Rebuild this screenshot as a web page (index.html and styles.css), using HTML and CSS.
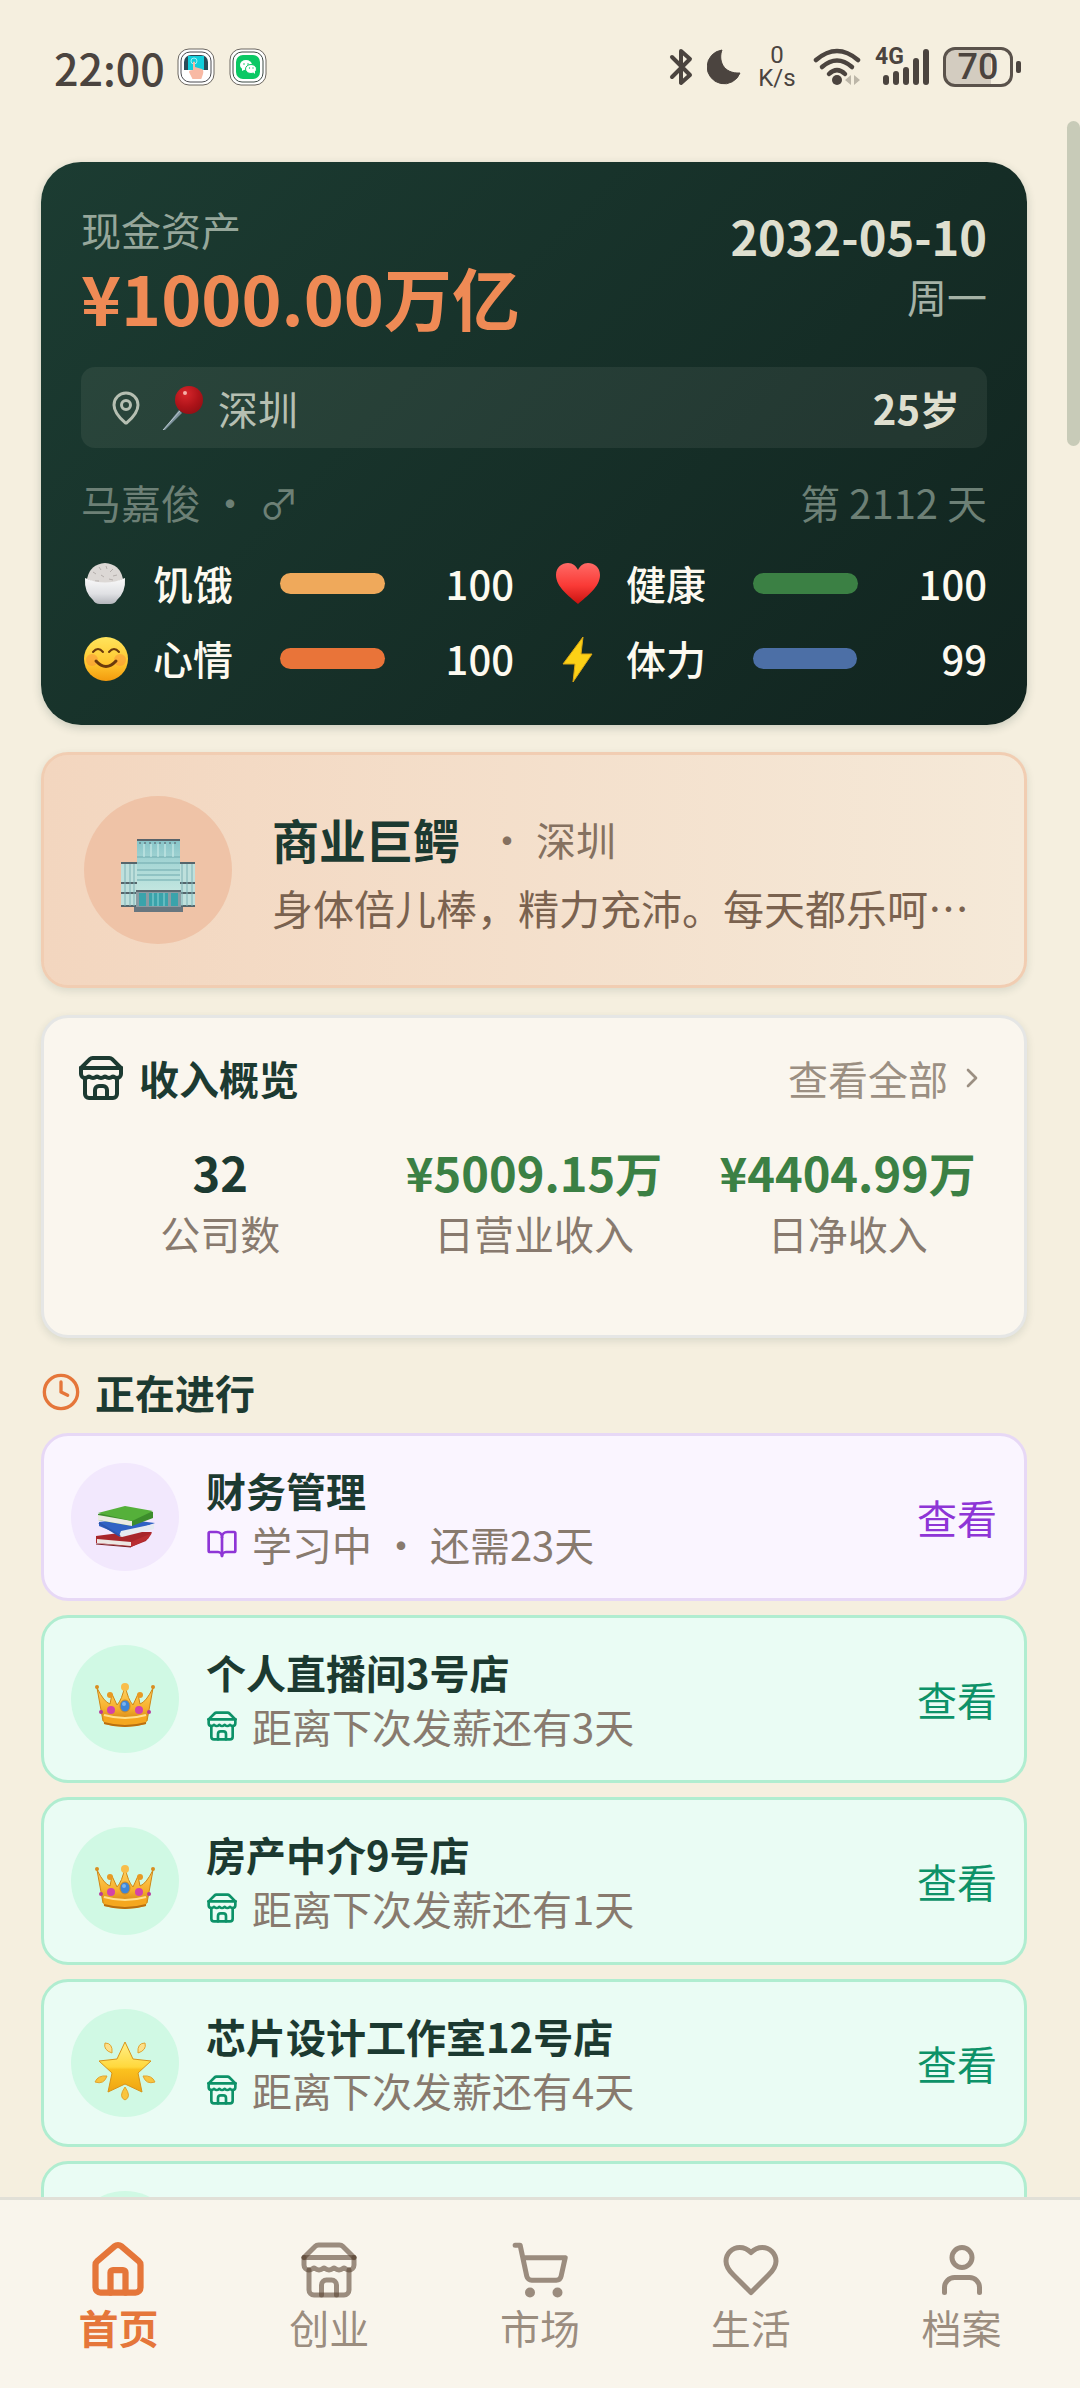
FILE: index.html
```html
<!DOCTYPE html>
<html lang="zh-CN">
<head>
<meta charset="utf-8">
<meta name="viewport" content="width=device-width, initial-scale=1">
<title>首页</title>
<link rel="stylesheet" href="styles.css">
</head>
<body>
<svg class="defs" width="0" height="0" aria-hidden="true">
  <defs>
    <radialGradient id="g-ball" cx=".38" cy=".28" r=".8"><stop offset="0" stop-color="#d8262b"/><stop offset=".6" stop-color="#ae1319"/><stop offset="1" stop-color="#8f0f14"/></radialGradient>
    <linearGradient id="g-face" x1="0" y1="0" x2="0" y2="1"><stop offset="0" stop-color="#ffe45c"/><stop offset=".6" stop-color="#ffc62e"/><stop offset="1" stop-color="#f39a0d"/></linearGradient>
    <linearGradient id="g-heart" x1="0" y1="0" x2="0" y2="1"><stop offset="0" stop-color="#ff6a66"/><stop offset=".55" stop-color="#fa3a36"/><stop offset="1" stop-color="#c9120f"/></linearGradient>
    <linearGradient id="g-bowl" x1="0" y1="0" x2="0" y2="1"><stop offset="0" stop-color="#fafafa"/><stop offset=".6" stop-color="#e0e1e4"/><stop offset="1" stop-color="#b4b6bc"/></linearGradient>
    <linearGradient id="g-gold" x1="0" y1="0" x2="0" y2="1"><stop offset="0" stop-color="#ffd466"/><stop offset=".6" stop-color="#f7b02c"/><stop offset="1" stop-color="#c97a10"/></linearGradient>
    <linearGradient id="g-star" x1="0" y1="0" x2="0" y2="1"><stop offset="0" stop-color="#fff08a"/><stop offset=".5" stop-color="#ffd83c"/><stop offset=".55" stop-color="#fbc21f"/><stop offset="1" stop-color="#efa313"/></linearGradient>
    <linearGradient id="g-glass" x1="0" y1="0" x2="0" y2="1"><stop offset="0" stop-color="#86c4c8"/><stop offset=".5" stop-color="#a9d8d6"/><stop offset="1" stop-color="#c3e6e0"/></linearGradient>

    <symbol id="store" viewBox="0 0 24 24">
      <path d="m2 7 4.410-4.410A2 2 0 0 1 7.830 2h8.340a2 2 0 0 1 1.420.590L22 7"/>
      <path d="M4 12v8a2 2 0 0 0 2 2h12a2 2 0 0 0 2-2v-8"/>
      <path d="M15 22v-4a2 2 0 0 0-2-2h-2a2 2 0 0 0-2 2v4"/>
      <path d="M2 7h20"/>
      <path d="M22 7v3a2 2 0 0 1-2 2a2.700 2.700 0 0 1-1.590-.630.700.700 0 0 0-.820 0A2.700 2.700 0 0 1 16 12a2.700 2.700 0 0 1-1.590-.630.700.700 0 0 0-.820 0A2.700 2.700 0 0 1 12 12a2.700 2.700 0 0 1-1.590-.630.700.700 0 0 0-.820 0A2.700 2.700 0 0 1 8 12a2.700 2.700 0 0 1-1.590-.630.700.700 0 0 0-.820 0A2.700 2.700 0 0 1 4 12a2 2 0 0 1-2-2V7"/>
    </symbol>

    <symbol id="crown" viewBox="0 0 60 60">
      <path d="M8 46 L2 13 Q9 27 15 29 L17 19 L22 30 Q27 25 30 10 Q33 25 38 30 L43 19 L45 29 Q51 27 58 13 L52 46 Q30 52 8 46Z" fill="url(#g-gold)" stroke="#cf8717" stroke-width="1"/>
      <path d="M8 40 Q30 46 52 40 L51 49 Q30 55 9 49Z" fill="#f5a71f"/>
      <path d="M9 47 Q30 53 51 47 L51 49 Q30 55 9 49Z" fill="#b96f10"/>
      <path d="M9 40 Q30 46 51 40" fill="none" stroke="#ffe08a" stroke-width="2"/>
      <circle cx="30" cy="12" r="4" fill="#f8be4a"/><circle cx="15" cy="20" r="3" fill="#e79a24"/><circle cx="45" cy="20" r="3" fill="#e79a24"/>
      <circle cx="2" cy="12" r="2" fill="#d98e20"/><circle cx="58" cy="12" r="2" fill="#d98e20"/>
      <ellipse cx="30" cy="31" rx="5" ry="6" fill="#3f86d8" stroke="#d08a20" stroke-width="1"/><ellipse cx="29" cy="29" rx="2" ry="2" fill="#7db4ee"/>
      <circle cx="16" cy="35" r="4" fill="#d443a8"/><circle cx="44" cy="35" r="4" fill="#d443a8"/><circle cx="6" cy="37" r="2" fill="#b83a9a"/><circle cx="54" cy="37" r="2" fill="#b83a9a"/>
    </symbol>
  </defs>
</svg>

<div class="app">
  <header class="status">
    <div class="status-side">
      <span class="clock">22:00</span>
      <svg class="app-icon" viewBox="0 0 38 38"><rect x="1" y="1" width="36" height="36" rx="11" fill="#fff" stroke="#6b6660" stroke-width="1"/><rect x="4" y="4" width="30" height="30" rx="9" fill="#fff" stroke="#4b4b50" stroke-width="1"/><clipPath id="c1"><rect x="7" y="7" width="24" height="24" rx="7"/></clipPath><g clip-path="url(#c1)"><rect x="7" y="7" width="24" height="24" fill="#fff"/><rect x="7" y="7" width="24" height="15" fill="#2b4c58"/><rect x="11" y="8" width="16" height="14" fill="#12cfdc"/><circle cx="17" cy="13" r="3" fill="none" stroke="#a5f1f5"/><path d="M16 14q1-1 2 0v5l7 2q2 1 1 5l-2 6h-8l-4-8q0-2 4-2z" fill="#f8b9a4"/></g></svg>
      <svg class="app-icon" viewBox="0 0 38 38"><rect x="1" y="1" width="36" height="36" rx="11" fill="#fff" stroke="#6b6660" stroke-width="1"/><rect x="4" y="4" width="30" height="30" rx="9" fill="#fff" stroke="#3d4a44" stroke-width="1"/><rect x="7" y="7" width="24" height="24" rx="7" fill="#0ac864"/><ellipse cx="17" cy="17" rx="6" ry="5" fill="#fff"/><path d="M13 20v3l4-2z" fill="#fff"/><ellipse cx="22" cy="21" rx="5.500" ry="4.500" fill="#fff" stroke="#0ac864" stroke-width="1"/><path d="M24 24l2 2v-3z" fill="#fff"/><circle cx="15" cy="16" r=".8" fill="#0ac864"/><circle cx="19" cy="16" r=".8" fill="#0ac864"/><circle cx="20.500" cy="20" r=".7" fill="#0ac864"/><circle cx="24" cy="20" r=".7" fill="#0ac864"/></svg>
    </div>
    <div class="status-side status-right">
      <svg class="bt" viewBox="0 0 24 38"><path d="M3 9 L21 27 L12 35 V3 L21 11 L3 29" fill="none" stroke="#4b443f" stroke-width="4" stroke-linecap="round" stroke-linejoin="round"/></svg>
      <svg class="moon" viewBox="0 0 34 38"><path d="M15 2 C11 12 16 26 33 25 A17 17 0 1 1 15 2Z" fill="#4b443f" stroke="#4b443f" stroke-width="1" stroke-linejoin="round"/></svg>
      <span class="speed"><span>0</span><span>K/s</span></span>
      <svg class="wifi" viewBox="0 0 48 38"><g fill="none" stroke="#4b443f" stroke-width="4.500" stroke-linecap="round"><path d="M3 12 Q24 -6 45 12"/><path d="M9 19 Q24 6 39 19"/><path d="M16 26 Q24 18 32 26"/></g><circle cx="24" cy="32" r="5" fill="#4b443f"/><path d="M38 27v10l-6-5zM41 27v10l6-5z" fill="#bcb6a8"/></svg>
      <span class="signal"><span class="net">4G</span><svg class="bars" viewBox="0 0 48 38"><g stroke="#4b443f" stroke-width="6" stroke-linecap="round"><path d="M5 30v4"/><path d="M15 26v8"/><path d="M25 22v12"/><path d="M35 13v21"/><path d="M45 4v30"/></g></svg></span>
      <span class="battery"><span class="cell">70</span></span>
    </div>
  </header>

  <main class="page">
    <section class="hero">
      <div class="hero-head">
        <div>
          <div class="label">现金资产</div>
          <div class="money">¥1000.00万亿</div>
        </div>
        <div class="when">
          <div class="date">2032-05-10</div>
          <div class="weekday">周一</div>
        </div>
      </div>
      <div class="place">
        <svg class="line-icon pin" viewBox="0 0 24 24"><path d="M20 10c0 4.993-5.539 10.193-7.399 11.799a1 1 0 0 1-1.202 0C9.539 20.193 4 14.993 4 10a8 8 0 0 1 16 0"/><circle cx="12" cy="10" r="3"/></svg>
        <svg class="pushpin" viewBox="0 0 44 48"><path d="M2 46 L18 26 L21 29 L4 46Z" fill="#7d929c"/><path d="M2 46 L19 27" stroke="#b9c8ce" stroke-width="1"/><circle cx="28" cy="16" r="14" fill="url(#g-ball)"/><circle cx="24" cy="9" r="2" fill="#f5b0a8"/></svg>
        <span>深圳</span>
        <strong class="age">25岁</strong>
      </div>
      <div class="who"><span>马嘉俊 • ♂</span><span>第 2112 天</span></div>
      <div class="stats">
        <div class="stat">
          <svg class="emoji" viewBox="0 0 48 48"><path d="M6 20 Q9 5 24 4 Q39 5 42 20 Q24 30 6 20Z" fill="#dcd8d5"/><path d="M12 13l3 2m3-7l2 3m5-4l1 3m6 0l-3 3m7 3l-4 1m-12-1l3 2m-9 4l4 0m10-2l4 1m4 2l3 0" stroke="#b4aeab" stroke-width="1"/><path d="M4 19 Q24 28 44 19 Q45 33 36 41 Q34 45 29 45 H19 Q14 45 12 41 Q3 33 4 19Z" fill="url(#g-bowl)"/></svg>
          <span class="name">饥饿</span><div class="track"><div class="fill amber" style="width:100%"></div></div><span class="value">100</span>
        </div>
        <div class="stat">
          <svg class="emoji" viewBox="0 0 48 48"><path d="M24 45 C15 37 2 28 2 16 C2 8 8 4 14 4 C19 4 22 7 24 11 C26 7 29 4 34 4 C40 4 46 8 46 16 C46 28 33 37 24 45Z" fill="url(#g-heart)"/></svg>
          <span class="name">健康</span><div class="track"><div class="fill green" style="width:100%"></div></div><span class="value">100</span>
        </div>
        <div class="stat">
          <svg class="emoji" viewBox="0 0 48 48"><circle cx="25" cy="25" r="22" fill="url(#g-face)"/><circle cx="11" cy="26" r="6" fill="#f98a3c" opacity=".45"/><circle cx="39" cy="26" r="6" fill="#f98a3c" opacity=".45"/><g fill="none" stroke="#6b3a0c" stroke-width="2" stroke-linecap="round"><path d="M12 18q5-6 10 0M28 18q5-6 10 0"/><path d="M15 27q10 11 20 0" stroke-width="3"/></g></svg>
          <span class="name">心情</span><div class="track"><div class="fill orange" style="width:100%"></div></div><span class="value">100</span>
        </div>
        <div class="stat">
          <svg class="emoji" viewBox="0 0 48 48"><path d="M29 3 L9 30 H21 L19 48 L38 20 H27Z" fill="#fcd116" stroke="#d9a514" stroke-width="1" stroke-linejoin="round"/></svg>
          <span class="name">体力</span><div class="track"><div class="fill blue" style="width:99%"></div></div><span class="value">99</span>
        </div>
      </div>
    </section>

    <section class="career">
      <div class="career-badge">
        <svg viewBox="0 0 76 76">
          <g><rect x="1" y="26" width="74" height="44" fill="#bfe0dc"/><path d="M1 26h74M1 46h74M1 56h74M1 69h74" stroke="#55666c" stroke-width="2"/><path d="M5 27v42M10 27v42M14 27v42M62 27v42M67 27v42M72 27v42" stroke="#7fb2b6" stroke-width="1"/></g>
          <rect x="17" y="3" width="43" height="51" fill="url(#g-glass)"/><path d="M17 3h43" stroke="#59636a" stroke-width="2"/><path d="M19 6h39" stroke="#6f8f96" stroke-width="2" stroke-dasharray="2 3"/>
          <path d="M17 20h43M17 26h43M17 33h43M17 38h43M17 43h43" stroke="#6fa9ad" stroke-width="1"/><path d="M24 7v13M31 7v13M38 7v13M45 7v13M53 7v13" stroke="#d3efec" stroke-width="1"/>
          <rect x="16" y="53" width="45" height="18" fill="#8b9ba2"/><path d="M16 54h45" stroke="#5b6970" stroke-width="2"/><path d="M19 56h7v13h-7zM29 56h19v13H29zM51 56h7v13h-7z" fill="#3aa3ab"/><path d="M38 56v13M33 56v13M44 56v13" stroke="#8fd4d6" stroke-width="1"/>
          <path d="M14 70h49v5H14z" fill="#68767f"/>
        </svg>
      </div>
      <div class="career-body">
        <div class="career-title"><h2>商业巨鳄</h2><span>• 深圳</span></div>
        <p>身体倍儿棒，精力充沛。每天都乐呵…</p>
      </div>
    </section>

    <section class="income">
      <div class="income-head">
        <h3><svg class="line-icon"><use href="#store"/></svg>收入概览</h3>
        <a class="more" href="#income">查看全部<svg class="line-icon" viewBox="0 0 24 24"><path d="m9 18 6-6-6-6"/></svg></a>
      </div>
      <div class="figures">
        <div><strong>32</strong><span>公司数</span></div>
        <div class="up"><strong>¥5009.15万</strong><span>日营业收入</span></div>
        <div class="up"><strong>¥4404.99万</strong><span>日净收入</span></div>
      </div>
    </section>

    <section class="ongoing">
      <h3><svg class="line-icon" viewBox="0 0 24 24"><circle cx="12" cy="12" r="10"/><path d="M12 6v6l4 2"/></svg>正在进行</h3>
      <article class="task study">
        <div class="task-badge"><svg viewBox="0 0 60 60">
          <path d="M1 43 L32 39 L57 39 L51 48 L36 54 L1 50Z" fill="#a8262b"/><path d="M2 46 L36 49 L36 53 L2 50Z" fill="#ece8e4"/><path d="M36 49 L57 40 L53 46 L36 54Z" fill="#b92d31"/><path d="M1 51 L36 54" stroke="#7c2023" stroke-width="1"/>
          <path d="M4 29 L28 26 L60 30 L26 42 L4 33Z" fill="#2f62c4"/><path d="M26 38 L59 31 L59 36 L27 44 L24 43Z" fill="#e6ebf1"/><path d="M4 30 L25 43" stroke="#2a55ad" stroke-width="2"/>
          <path d="M3 21 L30 14 L58 19 L58 25 L37 33 L3 27Z" fill="#3d8d2c"/><path d="M3 22 L37 28 L37 33 L3 27Z" fill="#eaeae2"/><path d="M3 20 L30 13 L58 18 L37 28Z" fill="#55b03a"/></svg></div>
        <div class="task-body"><h4>财务管理</h4><p><svg class="line-icon" viewBox="0 0 24 24"><path d="M12 7v14"/><path d="M3 18a1 1 0 0 1-1-1V4a1 1 0 0 1 1-1h5a4 4 0 0 1 4 4 4 4 0 0 1 4-4h5a1 1 0 0 1 1 1v13a1 1 0 0 1-1 1h-6a3 3 0 0 0-3 3 3 3 0 0 0-3-3z"/></svg><span>学习中 • 还需23天</span></p></div>
        <button type="button">查看</button>
      </article>
      <article class="task">
        <div class="task-badge"><svg><use href="#crown"/></svg></div>
        <div class="task-body"><h4>个人直播间3号店</h4><p><svg class="line-icon"><use href="#store"/></svg><span>距离下次发薪还有3天</span></p></div>
        <button type="button">查看</button>
      </article>
      <article class="task">
        <div class="task-badge"><svg><use href="#crown"/></svg></div>
        <div class="task-body"><h4>房产中介9号店</h4><p><svg class="line-icon"><use href="#store"/></svg><span>距离下次发薪还有1天</span></p></div>
        <button type="button">查看</button>
      </article>
      <article class="task">
        <div class="task-badge"><svg viewBox="0 0 60 60"><path d="M30 3 L38 20 L56 22 L43 34 L47 53 L30 45 L13 53 L17 34 L4 22 L22 20Z" fill="url(#g-star)" stroke="#d99418" stroke-width="1" stroke-linejoin="round"/><g fill="#f9c53e" stroke="#e3a42c" stroke-width="1"><path d="M17 14q-9-3-7-10q8 0 7 10z" fill="#fde08a"/><path d="M43 14q9-3 7-10q-8 0-7 10z" fill="#fde08a"/><path d="M12 37q-9-1-12 6q9 3 12-6z"/><path d="M48 37q9-1 12 6q-9 3-12-6z"/><path d="M30 48q-7 10 0 13q7-3 0-13z"/></g></svg></div>
        <div class="task-body"><h4>芯片设计工作室12号店</h4><p><svg class="line-icon"><use href="#store"/></svg><span>距离下次发薪还有4天</span></p></div>
        <button type="button">查看</button>
      </article>
      <article class="task">
        <div class="task-badge"></div>
      </article>
    </section>
  </main>

  <nav class="tabs">
    <a class="tab active" href="#home"><svg class="line-icon" viewBox="0 0 24 24"><path d="M15 21v-8a1 1 0 0 0-1-1h-4a1 1 0 0 0-1 1v8"/><path d="M3 10a2 2 0 0 1 .709-1.528l7-5.999a2 2 0 0 1 2.582 0l7 5.999A2 2 0 0 1 21 10v9a2 2 0 0 1-2 2H5a2 2 0 0 1-2-2z"/></svg>首页</a>
    <a class="tab" href="#startup"><svg class="line-icon"><use href="#store"/></svg>创业</a>
    <a class="tab" href="#market"><svg class="line-icon" viewBox="0 0 24 24"><circle cx="8" cy="21" r="1"/><circle cx="19" cy="21" r="1"/><path d="M2.050 2.050h2l2.660 12.420a2 2 0 0 0 2 1.580h9.780a2 2 0 0 0 1.950-1.570l1.650-7.430H5.120"/></svg>市场</a>
    <a class="tab" href="#life"><svg class="line-icon" viewBox="0 0 24 24"><path d="M19 14c1.490-1.460 3-3.210 3-5.500A5.500 5.500 0 0 0 16.500 3c-1.760 0-3 .500-4.500 2-1.500-1.500-2.740-2-4.500-2A5.500 5.500 0 0 0 2 8.500c0 2.300 1.500 4.050 3 5.500l7 7Z"/></svg>生活</a>
    <a class="tab" href="#profile"><svg class="line-icon" viewBox="0 0 24 24"><path d="M19 21v-2a4 4 0 0 0-4-4H9a4 4 0 0 0-4 4v2"/><circle cx="12" cy="7" r="4"/></svg>档案</a>
  </nav>
  <div class="thumb"></div>
</div>
</body>
</html>
```
FILE: styles.css
```css
:root {
  --ink: #1c3a31;
  --muted: #887a6e;
  --faint: rgba(92, 70, 54, .6);
  --orange: #e5763a;
  --line: 54px;
}
* { box-sizing: border-box; }
body {
  margin: 0;
  background: #f5efdf;
  color: var(--ink);
  font-family: "Noto Sans CJK SC", sans-serif;
  font-size: 40px;
  line-height: var(--line);
}
h2, h3, h4, p { margin: 0; font-size: inherit; }
a { color: inherit; text-decoration: none; }
svg { display: block; flex: none; }
.defs { position: absolute; }
.line-icon { fill: none; stroke: currentColor; stroke-width: 2; stroke-linecap: round; stroke-linejoin: round; }
.app { position: relative; display: flex; flex-direction: column; height: 100vh; overflow: hidden; }

/* Status bar */
.status { display: flex; justify-content: space-between; align-items: center; height: 134px; padding: 0 59px 0 54px; flex: none; color: #4b443f; }
.status-side { display: flex; align-items: center; gap: 14px; }
.clock { font-size: 43px; font-weight: 500; }
.app-icon { width: 38px; height: 38px; }
.clock { margin-right: -2px; }
.bt { width: 24px; height: 38px; }
.moon { width: 34px; height: 38px; }
.speed { display: flex; flex-direction: column; align-items: center; width: 44px; font: 24px/23px Roboto, sans-serif; }
.wifi { width: 48px; height: 38px; }
.signal { position: relative; width: 54px; padding-left: 6px; }
.net { position: absolute; left: 0; top: -3px; font: 700 23px/24px Roboto, sans-serif; }
.bars { width: 48px; height: 38px; }
.battery { display: flex; align-items: center; gap: 3px; }
.cell { width: 70px; height: 40px; border: 3px solid #5a524b; border-radius: 12px; text-align: center; font: 500 36px/35px Roboto, sans-serif; background: linear-gradient(90deg, #d3ccc0 70%, transparent 70%); }
.battery::after { content: ""; width: 5px; height: 12px; border-radius: 2px; background: #4b443f; }

.page { flex: 1; min-height: 0; overflow: hidden; padding: 28px 53px 0 41px; display: flex; flex-direction: column; gap: 27px; }
.page > * { flex: none; }
.thumb { position: absolute; top: 121px; right: 0; width: 13px; height: 325px; border-radius: 7px; background: #c8cbb8; }

/* Asset card */
.hero { padding: 40px 40px 38px; border-radius: 40px; background: linear-gradient(135deg, #1c3c32, #11241f); color: #fdfaf0; box-shadow: 0 3px 10px rgba(28, 58, 49, .2); }
.hero-head { display: flex; justify-content: space-between; align-items: flex-start; margin-bottom: 29px; }
.label { color: #96a79b; }
.money { font-size: 68px; line-height: 82px; font-weight: 700; color: #ef8a55; }
.when { padding-top: 6px; text-align: right; }
.date { font-size: 47px; line-height: 56px; font-weight: 700; color: #dedfcf; }
.weekday { line-height: 64px; color: #a5b2a6; }
.place { display: flex; align-items: center; height: 81px; padding: 0 27px; border-radius: 14px; background: rgba(245, 239, 223, .07); color: #b6bfb2; }
.pin { width: 36px; height: 36px; margin-right: 17px; }
.pushpin { width: 44px; height: 48px; margin-right: 13px; }
.age { margin-left: auto; color: #dedfcf; }
.who { display: flex; justify-content: space-between; line-height: 60px; margin: 24px 0 22px; color: #6d8076; }
.stats { display: grid; grid-template-columns: 1fr 1fr; gap: 17px 40px; }
.stat { display: flex; align-items: center; gap: 24px; line-height: 58px; font-weight: 500; }
.emoji { width: 48px; height: 48px; }
.name { width: 103px; }
.track { flex: 1; height: 21px; border-radius: 11px; }
.fill { height: 100%; border-radius: 11px; }
.amber { background: #efa95b; }
.green { background: #3b8044; }
.orange { background: #e97439; }
.blue { background: #4c6fa6; }
.value { width: 105px; text-align: right; }

/* Career card */
.career { display: flex; align-items: center; gap: 40px; padding: 41px 40px; border: 3px solid rgba(232, 135, 85, .32); border-radius: 27px; background: linear-gradient(90deg, #f3d6bf, #f5e9d8); background-clip: padding-box; box-shadow: 0 3px 8px rgba(28, 58, 49, .12); }
.career-badge { display: grid; place-items: center; flex: none; width: 148px; height: 148px; padding-top: 10px; border-radius: 50%; background: #efc3a7; }
.career-badge svg { width: 76px; height: 76px; }
.career-body { min-width: 0; }
.career-title { display: flex; align-items: center; gap: 27px; line-height: 74px; color: #857160; }
.career-title h2 { font-size: 47px; color: var(--ink); }
.career-body p { font-size: 41px; line-height: 62px; white-space: nowrap; color: #7a624f; }

/* Income card */
.income { padding: 33px 33px 75px; border: 3px solid #e5e6e5; border-radius: 27px; background: #faf6ee; box-shadow: 0 3px 8px rgba(28, 58, 49, .12); }
.income-head { display: flex; justify-content: space-between; align-items: center; margin-bottom: 33px; }
.income-head h3, .ongoing h3 { display: flex; align-items: center; gap: 14px; }
.income-head h3 svg { width: 48px; height: 48px; }
.more { display: flex; align-items: center; gap: 8px; margin-right: 3px; color: #9b8f82; }
.more svg { width: 32px; height: 32px; }
.figures { display: grid; grid-template-columns: repeat(3, 1fr); gap: 27px; text-align: center; }
.figures div { display: flex; flex-direction: column; align-items: center; white-space: nowrap; }
.figures strong { font-size: 47px; line-height: 68px; }
.figures span { color: var(--muted); }
.up strong { color: #3b8044; }

/* Ongoing list */
.ongoing { display: flex; flex-direction: column; gap: 14px; }
.ongoing h3 svg { width: 40px; height: 40px; color: var(--orange); }
.task { --accent: #0d9268; display: flex; align-items: center; gap: 27px; padding: 27px; border: 3px solid #b0edd0; border-radius: 27px; background: #eafcf4; }
.task-badge { display: grid; place-items: center; width: 108px; height: 108px; padding-top: 12px; border-radius: 50%; background: #d0f9e4; }
.task-badge svg { width: 60px; height: 60px; overflow: visible; }
.task-body { flex: 1; }
.task-body p { display: flex; align-items: center; gap: 14px; color: var(--muted); }
.task-body p svg { width: 32px; height: 32px; color: var(--accent); }
.task button { padding: 0; border: 0; background: none; font: inherit; color: var(--accent); cursor: pointer; }
.study { --accent: #8e35d6; border-color: #e7d8f6; background: #faf5ff; }
.study .task-badge { background: #f2e8fd; }

/* Bottom tabs */
.tabs { display: grid; grid-template-columns: repeat(5, 1fr); flex: none; padding: 40px 13px 34px; border-top: 3px solid #e1e0d7; background: #f9f5ec; }
.tab { display: flex; flex-direction: column; align-items: center; color: var(--faint); }
.tab svg { width: 60px; height: 60px; }
.active { color: var(--orange); font-weight: 700; }
.active svg { stroke-width: 2.5; }
```
